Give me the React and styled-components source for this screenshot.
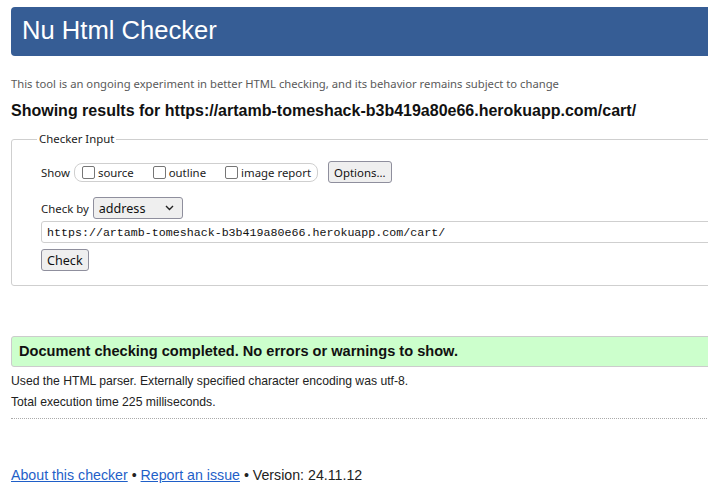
import React from 'react';
import styled, { createGlobalStyle } from 'styled-components';

const GlobalStyle = createGlobalStyle`
  html, body {
    margin: 0;
    padding: 0;
    background: #fff;
    overflow: hidden;
  }
  body {
    font-family: "Liberation Sans", Arial, sans-serif;
    color: #111;
  }
`;

const URL = 'https://artamb-tomeshack-b3b419a80e66.herokuapp.com/cart/';

const Chevron = () => (
  <svg width="9" height="6" viewBox="0 0 9 6" aria-hidden="true">
    <path d="M1 1l3.5 3.5L8 1" fill="none" stroke="#222" strokeWidth="1.4" />
  </svg>
);

const App = () => (
  <>
    <GlobalStyle />
    <Page>
      <Title>Nu Html Checker</Title>
      <Tagline>
        This tool is an ongoing experiment in better HTML checking, and its behavior remains subject to change
      </Tagline>
      <ResultsFor>Showing results for {URL}</ResultsFor>

      <Form>
        <Legend>Checker Input</Legend>
        <Row>
          <Label>Show</Label>
          <ShowGroup>
            {['source', 'outline', 'image report'].map((name) => (
              <CheckOption key={name}>
                <Box />
                {name}
              </CheckOption>
            ))}
          </ShowGroup>
          <Button $ml={10}>Options...</Button>
        </Row>
        <Row $mt={14}>
          <Label>Check by</Label>
          <Select>
            address
            <Chevron />
          </Select>
        </Row>
        <UrlField>{URL}</UrlField>
        <Row $mt={6}>
          <Button $big>Check</Button>
        </Row>
      </Form>

      <Success>Document checking completed. No errors or warnings to show.</Success>
      <DetailList>
        <Details>Used the HTML parser. Externally specified character encoding was utf-8.</Details>
        <Details>Total execution time 225 milliseconds.</Details>
      </DetailList>
      <Rule />

      <Footer>
        <Link href="#">About this checker</Link> • <Link href="#">Report an issue</Link> • Version: 24.11.12
      </Footer>
    </Page>
  </>
);

const Page = styled.div`
  width: 760px;
  padding: 7px 0 0 11px;
`;

const Title = styled.h1`
  margin: 0;
  height: 47px;
  display: flex;
  align-items: center;
  padding: 0 11px 2px;
  background: #365d95;
  color: #fff;
  border-radius: 4px;
  font-family: "Liberation Sans", Arial, sans-serif;
  font-weight: normal;
  font-size: 25.6px;
`;

const Tagline = styled.p`
  margin: 20px 0 0;
  font-family: "Noto Sans", "Open Sans", sans-serif;
  font-size: 11.25px;
  line-height: 16px;
  color: #5a5a5a;
`;

const ResultsFor = styled.h2`
  margin: 9px 0 0;
  font-size: 16px;
  line-height: 20px;
  font-weight: bold;
  color: #111;
`;

const Form = styled.fieldset`
  margin: 11px 0 0;
  padding: 15px 29px 14px;
  border: 1px solid #cfcfcf;
  border-radius: 3px;
  font-family: "Noto Sans", "Open Sans", sans-serif;
  font-size: 11.4px;
  color: #222;
`;

const Legend = styled.legend`
  margin-left: -4px;
  padding: 0 2px;
  line-height: 14px;
`;

const Row = styled.div`
  display: flex;
  align-items: center;
  height: 22px;
  margin-top: ${(p) => p.$mt || 0}px;
`;

const Label = styled.span`
  margin-right: 4px;
`;

const ShowGroup = styled.div`
  display: flex;
  align-items: center;
  gap: 19px;
  height: 17px;
  padding: 0 6px 0 7px;
  border: 1px solid #cfcfcf;
  border-radius: 8px;
`;

const CheckOption = styled.label`
  display: flex;
  align-items: center;
  gap: 3px;
`;

const Box = styled.span`
  width: 11px;
  height: 11px;
  border: 1px solid #767676;
  border-radius: 2px;
  background: #fff;
`;

const Button = styled.button`
  height: 22px;
  margin-left: ${(p) => p.$ml || 0}px;
  padding: 0 5px;
  background: #efefef;
  border: 1px solid #8f8f9d;
  border-radius: 3px;
  font-family: "Noto Sans", "Open Sans", sans-serif;
  font-size: ${(p) => (p.$big ? 12.6 : 11.4)}px;
  color: #111;
`;

const Select = styled.div`
  display: flex;
  align-items: center;
  justify-content: space-between;
  box-sizing: border-box;
  width: 90px;
  height: 22px;
  padding: 0 8px 0 5px;
  border: 1px solid #8f8f9d;
  border-radius: 3px;
  background: #efefef;
  font-size: 12.6px;
  color: #111;
`;

const UrlField = styled.div`
  box-sizing: border-box;
  height: 22px;
  margin-top: 2px;
  padding: 0 5px;
  display: flex;
  align-items: center;
  border: 1px solid #cfcfcf;
  border-radius: 3px;
  font-family: "Liberation Mono", "DejaVu Sans Mono", monospace;
  font-size: 11.65px;
  color: #111;
`;

const Success = styled.p`
  margin: 50px 0 0;
  padding: 6px 7px;
  background: #ccffcc;
  border: 1px solid #cccccc;
  border-radius: 3px;
  font-size: 14.6px;
  line-height: 17px;
  font-weight: bold;
  color: #111;
`;

const DetailList = styled.div`
  margin-top: 4px;
`;

const Details = styled.p`
  margin: 0;
  font-size: 12.2px;
  line-height: 21px;
  color: #222;
`;

const Rule = styled.hr`
  margin: 5px 0 0;
  border: 0;
  border-top: 1px dotted #aaa;
`;

const Footer = styled.p`
  margin: 47px 0 0;
  font-size: 14.2px;
  line-height: 18px;
  color: #222;
`;

const Link = styled.a`
  color: #1f5fc8;
  text-decoration: underline;
`;

export default App;
